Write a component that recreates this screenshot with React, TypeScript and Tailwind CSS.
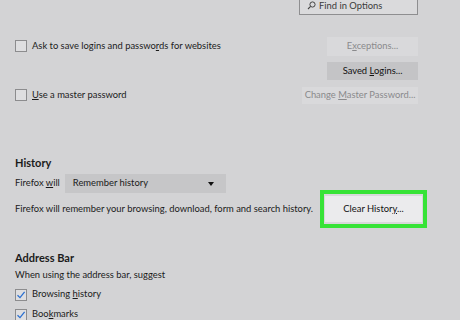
const font = "font-['Lato','Noto_Sans',sans-serif]";

const Box = ({ checked }: { checked?: boolean }) => (
    <span className="w-[12px] h-[12px] border border-[#8c8c8e] bg-[#dedee0] flex items-center justify-center shrink-0">
        {checked && (
            <svg width="10" height="10" viewBox="0 0 10 10">
                <path d="M1.5 5.2 L4 7.6 L8.6 1.8" fill="none" stroke="#2a6fd0" strokeWidth="1.3" />
            </svg>
        )}
    </span>
);

const Btn = ({ children, className }: { children: React.ReactNode; className: string }) => (
    <div className={"flex items-center justify-center whitespace-nowrap " + className}>
        <span>{children}</span>
    </div>
);

export default function App() {
    return (
        <div className={"w-[460px] h-[320px] overflow-hidden bg-[#d3d3d5] text-[#1b1b1b] text-[9.4px] pl-[15px] pr-[42px] " + font}>
            <div className="flex justify-end h-[15px]">
                <div className="w-[119px] h-[22px] mt-[-7px] border border-[#8e8e90] bg-[#dadadc] flex items-end pb-[2px] pl-[7px] gap-[3px] text-[#3a3a3a] leading-[12px]">
                    <svg width="9" height="9" viewBox="0 0 9 9" className="mb-[2px]">
                        <circle cx="5.5" cy="3.5" r="2.6" fill="none" stroke="#444" strokeWidth="1" />
                        <path d="M3.6 5.4 L1 8" stroke="#444" strokeWidth="1.1" />
                    </svg>
                    <span>Find in Options</span>
                </div>
            </div>

            <div className="flex items-center justify-between h-[19px] mt-[22px]">
                <div className="flex items-center gap-[5px]">
                    <Box />
                    <span>Ask to save logins and passwo<u>r</u>ds for websites</span>
                </div>
                <Btn className="w-[91px] h-[19px] bg-[#d9d9db] text-[#8a8a8c]">E<u>x</u>ceptions...</Btn>
            </div>

            <div className="flex justify-end h-[18px] mt-[6px]">
                <Btn className="w-[91px] h-[18px] bg-[#c4c4c6] text-[#111]">Saved <u>L</u>ogins...</Btn>
            </div>

            <div className="flex items-center justify-between h-[17px] mt-[7px]">
                <div className="flex items-center gap-[5px]">
                    <Box />
                    <span><u>U</u>se a master password</span>
                </div>
                <Btn className="w-[116px] h-[17px] bg-[#d9d9db] text-[#8a8a8c]">Change <u>M</u>aster Password...</Btn>
            </div>

            <div className="h-[16px] mt-[51px] text-[11px] font-bold leading-[16px]">History</div>

            <div className="flex items-center h-[19px] mt-[3px] gap-[5px]">
                <span>Firefox <u>w</u>ill</span>
                <div className="w-[161px] h-[19px] bg-[#c6c6c8] flex items-center justify-between pl-[8px] pr-[12px]">
                    <span>Remember history</span>
                    <svg width="6" height="4" viewBox="0 0 6 4">
                        <path d="M0 0 H6 L3 4 Z" fill="#111" />
                    </svg>
                </div>
            </div>

            <div className="flex items-center justify-between h-[38px] mt-[-3px] mr-[-9px]">
                <span className="whitespace-nowrap">Firefox will remember your browsing, download, form and search history.</span>
                <div className="w-[107px] h-[38px] border-[4px] border-[#37e337] bg-[#d8d8da] flex items-center p-[1px] shrink-0">
                    <Btn className="w-full h-[26px] bg-[#ebebed] text-[#111]">Clear Histor<u>y</u>...</Btn>
                </div>
            </div>

            <div className="h-[16px] mt-[22px] text-[11px] font-bold leading-[16px]">Address Bar</div>
            <div className="h-[14px] mt-[2px] leading-[14px]">When using the address bar, suggest</div>

            <div className="flex items-center gap-[5px] h-[13px] mt-[6px]">
                <Box checked />
                <span>Browsing <u>h</u>istory</span>
            </div>
            <div className="flex items-center gap-[5px] h-[13px] mt-[7px]">
                <Box checked />
                <span>Boo<u>k</u>marks</span>
            </div>
        </div>
    );
}
